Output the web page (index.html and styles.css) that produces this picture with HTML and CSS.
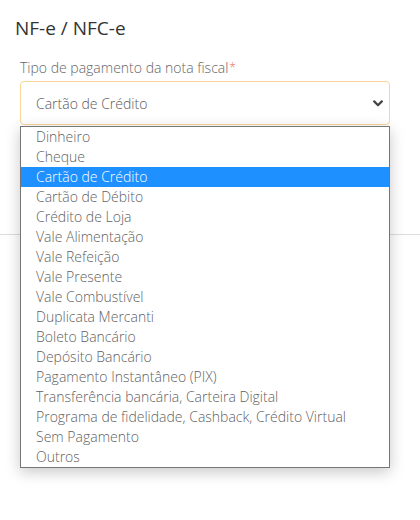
FILE: index.html
```html
<!DOCTYPE html>
<html lang="pt-BR">
<head>
<meta charset="utf-8">
<title>NF-e / NFC-e</title>
<link rel="stylesheet" href="styles.css">
</head>
<body>
<div class="page">
  <h2 class="title">NF-e / NFC-e</h2>
  <div class="field">
    <label class="label">Tipo de pagamento da nota fiscal<span class="req">*</span></label>
    <div class="select">
      <span class="value">Cartão de Crédito</span>
      <svg class="chev" width="10" height="7" viewBox="0 0 10 7"><path d="M1.2 1.4 L5 5.2 L8.8 1.4" fill="none" stroke="#444" stroke-width="2.2" stroke-linecap="round" stroke-linejoin="round"/></svg>
      <ul class="options">
        <li>Dinheiro</li>
        <li>Cheque</li>
        <li class="selected">Cartão de Crédito</li>
        <li>Cartão de Débito</li>
        <li>Crédito de Loja</li>
        <li>Vale Alimentação</li>
        <li>Vale Refeição</li>
        <li>Vale Presente</li>
        <li>Vale Combustível</li>
        <li>Duplicata Mercanti</li>
        <li>Boleto Bancário</li>
        <li>Depósito Bancário</li>
        <li>Pagamento Instantâneo (PIX)</li>
        <li>Transferência bancária, Carteira Digital</li>
        <li>Programa de fidelidade, Cashback, Crédito Virtual</li>
        <li>Sem Pagamento</li>
        <li>Outros</li>
      </ul>
    </div>
  </div>
  <hr class="divider">
</div>
</body>
</html>
```
FILE: styles.css
```css
html, body {
  margin: 0;
  padding: 0;
  background: #fff;
}
body {
  font-family: "Open Sans", "Liberation Sans", sans-serif;
  color: #333;
}
.page {
  padding-top: 16px;
  min-height: 520px;
  box-sizing: border-box;
}
.title {
  margin: 0 0 0 15px;
  font-size: 19px;
  line-height: 24px;
  font-weight: 400;
  color: #333;
}
.field {
  margin: 18px 0 0 20px;
  width: 370px;
}
.label {
  display: block;
  font-size: 14px;
  line-height: 20px;
  font-weight: 300;
  color: #666;
}
.req {
  color: #e9735a;
  font-size: 12px;
  margin-left: 1px;
  vertical-align: top;
}
.select {
  position: relative;
  margin-top: 3px;
  height: 44px;
  box-sizing: border-box;
  border: 1px solid #f9d59a;
  border-radius: 4px;
  background: #fff;
  display: flex;
  align-items: center;
  padding: 0 6px 0 15px;
}
.value {
  flex: 1;
  font-size: 14px;
  font-weight: 300;
  color: #5a5a5a;
}
.chev {
  display: block;
}
.options {
  position: absolute;
  left: -1px;
  right: -1px;
  top: 44px;
  margin: 0;
  padding: 0;
  list-style: none;
  background: #fff;
  border: 1px solid #767676;
  box-shadow: 0 4px 14px rgba(0, 0, 0, 0.22);
  z-index: 2;
}
.options li {
  height: 20px;
  line-height: 20px;
  padding-left: 15px;
  font-size: 14px;
  font-weight: 300;
  color: #5f5f5f;
  white-space: nowrap;
}
.options li.selected {
  background: #1e90ff;
  color: #fff;
}
.divider {
  margin: 109px 0 0 0;
  border: 0;
  border-top: 1px solid #ddd;
  overflow: visible;
}
```
